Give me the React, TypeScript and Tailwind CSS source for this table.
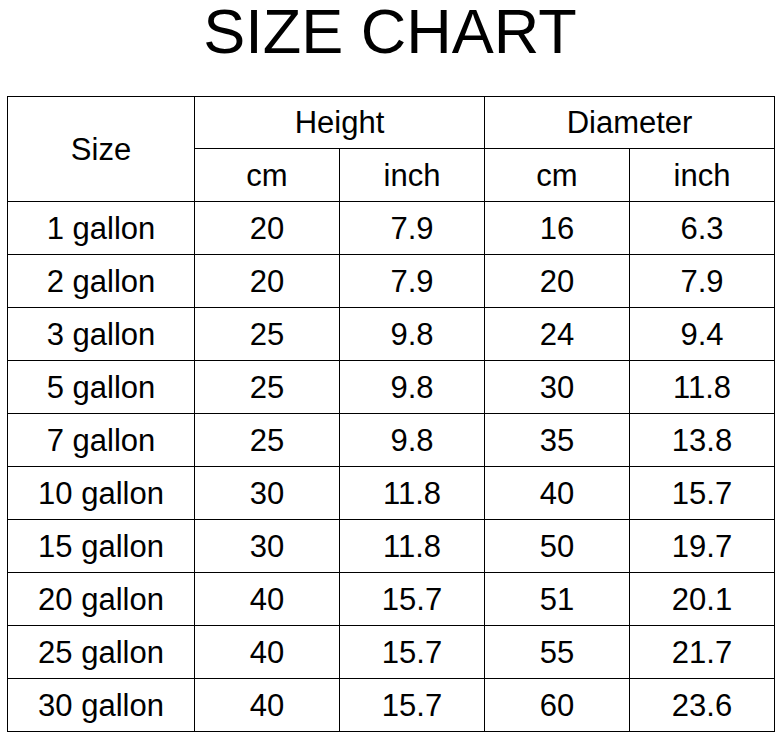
import React from 'react';

// 표 데이터: [size, height cm, height inch, diameter cm, diameter inch]
const rows: string[][] = [
  ['1 gallon', '20', '7.9', '16', '6.3'],
  ['2 gallon', '20', '7.9', '20', '7.9'],
  ['3 gallon', '25', '9.8', '24', '9.4'],
  ['5 gallon', '25', '9.8', '30', '11.8'],
  ['7 gallon', '25', '9.8', '35', '13.8'],
  ['10 gallon', '30', '11.8', '40', '15.7'],
  ['15 gallon', '30', '11.8', '50', '19.7'],
  ['20 gallon', '40', '15.7', '51', '20.1'],
  ['25 gallon', '40', '15.7', '55', '21.7'],
  ['30 gallon', '40', '15.7', '60', '23.6'],
];

const cell = 'border border-black text-center align-middle h-[53px] p-0';
const head = 'border border-black text-center align-middle p-0 font-normal';

const App: React.FC = () => {
  return (
    <div className="w-[780px] h-[741px] bg-white text-black font-['Liberation_Sans',Arial,sans-serif] overflow-hidden">
      <h1 className="pt-[4px] text-[63px] leading-[63px] text-center font-normal -mt-[4px]">SIZE CHART</h1>

      <table className="mt-[33px] ml-[7px] border-collapse table-fixed w-[767px] text-[31px] leading-none">
        <colgroup>
          <col className="w-[187px]" />
          <col className="w-[145px]" />
          <col className="w-[145px]" />
          <col className="w-[145px]" />
          <col className="w-[145px]" />
        </colgroup>
        <thead>
          <tr className="h-[52px]">
            <th rowSpan={2} className={head}>Size</th>
            <th colSpan={2} className={head}>Height</th>
            <th colSpan={2} className={head}>Diameter</th>
          </tr>
          <tr className="h-[53px]">
            <th className={head}>cm</th>
            <th className={head}>inch</th>
            <th className={head}>cm</th>
            <th className={head}>inch</th>
          </tr>
        </thead>
        <tbody>
          {rows.map((r) => (
            <tr key={r[0]}>
              {r.map((v, i) => (
                <td key={i} className={cell}>{v}</td>
              ))}
            </tr>
          ))}
        </tbody>
      </table>
    </div>
  );
};

export default App;
